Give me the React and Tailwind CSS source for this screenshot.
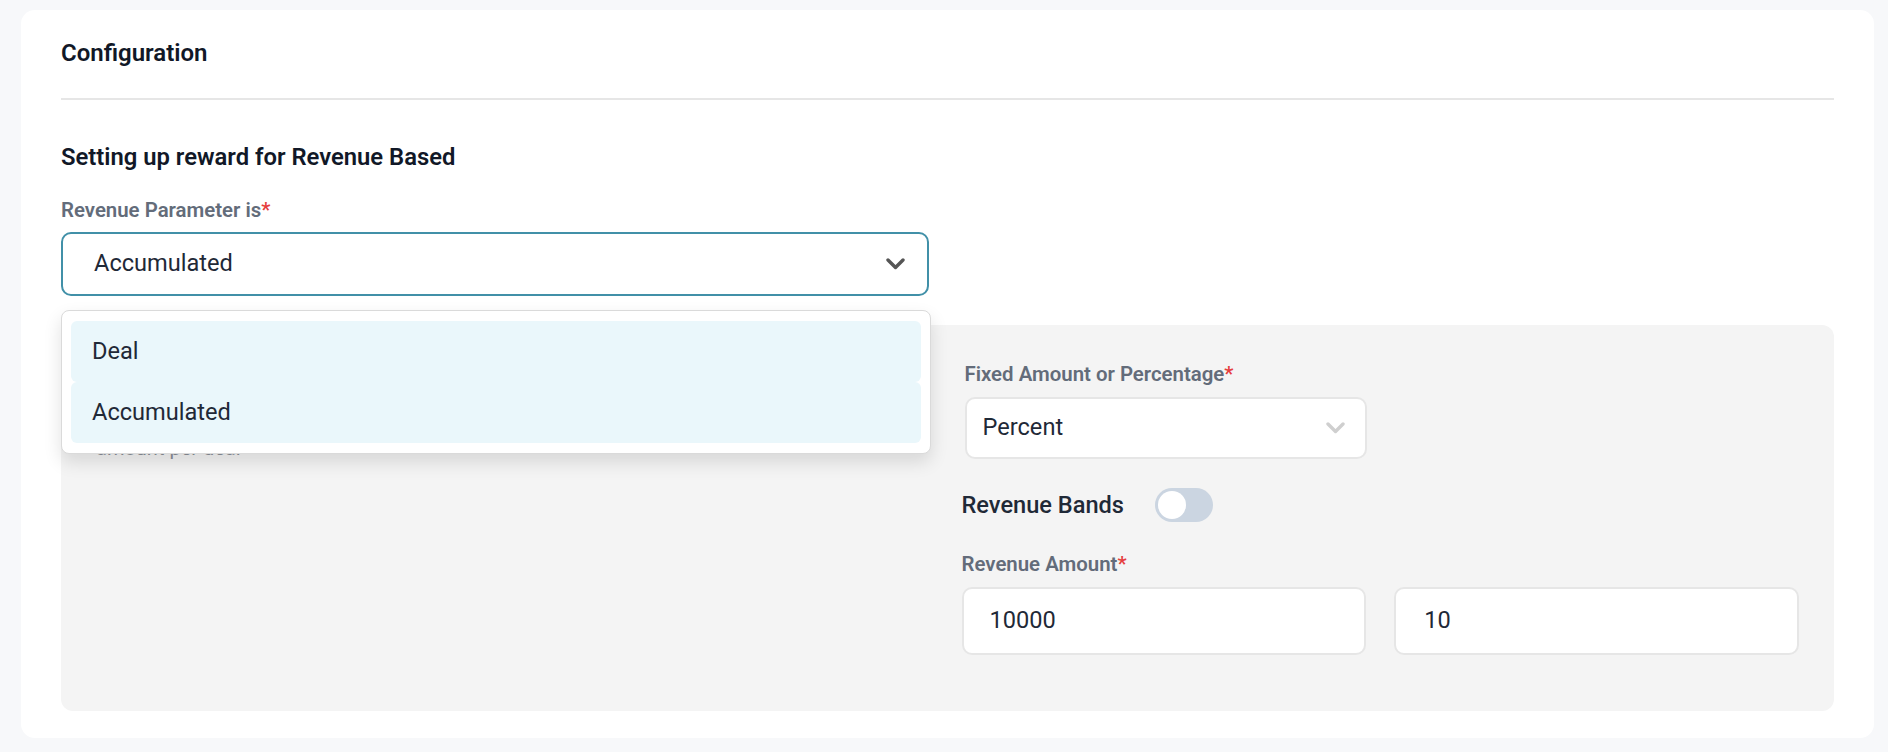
import React from "react";

function Chevron({ color = "#555555", w = 19, h = 12, sw = 3.4 }) {
  return (
    <svg width={w} height={h} viewBox="0 0 19 12" fill="none">
      <polyline points="2,2 9.5,9.5 17,2" stroke={color} strokeWidth={sw} strokeLinecap="round" strokeLinejoin="round" />
    </svg>
  );
}

function Label({ children, className = "" }) {
  return (
    <div className={"text-[20.4px] leading-[28px] font-semibold text-[#636c7a] " + className}>
      {children}
      <span className="text-[#e53e3e]">*</span>
    </div>
  );
}

export default function App() {
  return (
    <div className="min-h-screen bg-[#f7f8fa] pl-[21px] pr-[14px] pt-[10px] pb-[16px] font-['Roboto',sans-serif]">
      <div className="rounded-[14px] bg-white px-[40px] pt-[27px] pb-[27px]">
        <h2 className="text-[24px] leading-[32px] font-semibold text-[#111827]">Configuration</h2>
        <div className="mt-[29px] h-[2px] bg-[#e6e6e6]" />
        <h3 className="mt-[41px] text-[23.8px] leading-[32px] font-semibold text-[#111827]">
          Setting up reward for Revenue Based
        </h3>
        <Label className="mt-[23px]">Revenue Parameter is</Label>
        <div className="relative mt-[8px] w-[868px]">
          <div className="flex h-[64px] items-center justify-between rounded-[10px] border-2 border-[#4190a8] bg-white pl-[31px] pr-[22px]">
            <span className="text-[23.6px] text-[#1f2937]">Accumulated</span>
            <Chevron />
          </div>
          <div className="absolute left-0 top-[78px] z-10 w-[870px] rounded-[8px] border border-[#dadada] bg-white px-[9px] pt-[10px] pb-[10px] shadow-[0_8px_18px_rgba(0,0,0,0.12)]">
            <div className="flex h-[61px] items-center rounded-[6px] bg-[#eaf7fb] pl-[21px] text-[23.6px] text-[#1f2937]">Deal</div>
            <div className="flex h-[61px] items-center rounded-[6px] bg-[#eaf7fb] pl-[21px] text-[23.6px] text-[#1f2937]">Accumulated</div>
          </div>
        </div>

        <div className="mt-[29px] grid grid-cols-2 gap-x-[28px] rounded-[12px] bg-[#f4f4f4] px-[35px] pt-[35px] pb-[56px]">
          <div>
            <Label>Reward Type</Label>
            <p className="mt-[18px] text-[20px] leading-[28px] text-[#8a8f98]">
              Reward will be calculated as a fixed amount or a percentage of the revenue
              <br />
              amount per deal
            </p>
          </div>
          <div>
            <div className="pl-[3px]">
              <Label>Fixed Amount or Percentage</Label>
              <div className="mt-[9px] flex h-[62px] w-[402px] items-center justify-between rounded-[10px] border-2 border-[#e6e6e6] bg-white pl-[16px] pr-[20px]">
                <span className="text-[23.6px] text-[#1f2937]">Percent</span>
                <Chevron color="#cfcfcf" />
              </div>
            </div>
            <div className="mt-[29px] flex h-[34px] items-center gap-[31px]">
              <span className="text-[23.6px] leading-[34px] font-medium text-[#1f2937]">Revenue Bands</span>
              <div className="flex h-[34px] w-[58px] items-center rounded-full bg-[#cbd5e1] p-[3px]">
                <div className="h-[28px] w-[28px] rounded-full bg-white" />
              </div>
            </div>
            <Label className="mt-[28px]">Revenue Amount</Label>
            <div className="mt-[9px] grid grid-cols-2 gap-[28px]">
              <div className="flex h-[68px] items-center rounded-[10px] border-2 border-[#e6e6e6] bg-white pl-[26px] text-[23.6px] text-[#1f2937]">10000</div>
              <div className="flex h-[68px] items-center rounded-[10px] border-2 border-[#e6e6e6] bg-white pl-[28px] text-[23.6px] text-[#1f2937]">10</div>
            </div>
          </div>
        </div>
      </div>
    </div>
  );
}
